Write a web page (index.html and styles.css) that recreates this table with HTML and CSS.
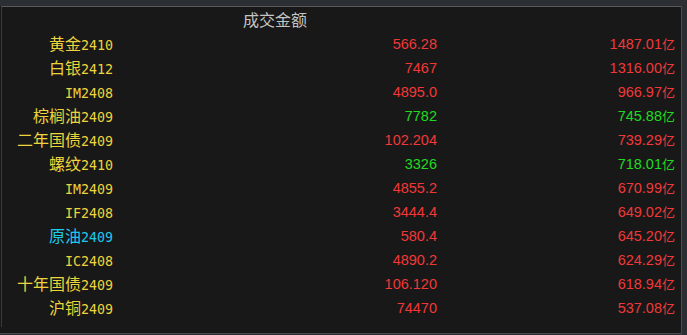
FILE: index.html
```html
<!DOCTYPE html>
<html lang="zh">
<head>
<meta charset="utf-8">
<link rel="stylesheet" href="styles.css">
</head>
<body>
<div class="panel">
  <div class="frame">
    <div class="grid">
      <div class="hd"></div><div class="hd hd-amt">成交金额</div><div class="hd"></div>

      <div class="name">黄金<span class="code">2410</span></div><div class="num up">566.28</div><div class="num up">1487.01<span class="yi">亿</span></div>
      <div class="name">白银<span class="code">2412</span></div><div class="num up">7467</div><div class="num up">1316.00<span class="yi">亿</span></div>
      <div class="name"><span class="code">IM2408</span></div><div class="num up">4895.0</div><div class="num up">966.97<span class="yi">亿</span></div>
      <div class="name">棕榈油<span class="code">2409</span></div><div class="num down">7782</div><div class="num down">745.88<span class="yi">亿</span></div>
      <div class="name">二年国债<span class="code">2409</span></div><div class="num up">102.204</div><div class="num up">739.29<span class="yi">亿</span></div>
      <div class="name">螺纹<span class="code">2410</span></div><div class="num down">3326</div><div class="num down">718.01<span class="yi">亿</span></div>
      <div class="name"><span class="code">IM2409</span></div><div class="num up">4855.2</div><div class="num up">670.99<span class="yi">亿</span></div>
      <div class="name"><span class="code">IF2408</span></div><div class="num up">3444.4</div><div class="num up">649.02<span class="yi">亿</span></div>
      <div class="name cyan">原油<span class="code">2409</span></div><div class="num up">580.4</div><div class="num up">645.20<span class="yi">亿</span></div>
      <div class="name"><span class="code">IC2408</span></div><div class="num up">4890.2</div><div class="num up">624.29<span class="yi">亿</span></div>
      <div class="name">十年国债<span class="code">2409</span></div><div class="num up">106.120</div><div class="num up">618.94<span class="yi">亿</span></div>
      <div class="name">沪铜<span class="code">2409</span></div><div class="num up">74470</div><div class="num up">537.08<span class="yi">亿</span></div>
    </div>
  </div>
</div>
</body>
</html>
```

FILE: styles.css
```css
html, body {
  margin: 0;
  padding: 0;
  background: #2b2e33;
  width: 687px;
  height: 335px;
  overflow: hidden;
}

.panel {
  width: 681px;
  height: 327px;
  background: #181818;
  border-right: 1px solid #4a4a4a;
  border-bottom: 1px solid #4a4a4a;
}

.frame {
  margin-top: 6px;
  margin-left: 1px;
  height: 320px;
  border-top: 1px solid #5a5a5a;
  border-left: 1px solid #3a3a3a;
}

.grid {
  display: grid;
  grid-template-columns: 111px 324px 238px;
  grid-template-rows: 25px;
  grid-auto-rows: 24px;
}

.hd {
  font-family: "Noto Sans CJK SC", sans-serif;
  font-size: 16px;
  line-height: 25px;
  color: #c4c4c4;
}

.hd-amt {
  text-align: center;
}

.name {
  font-family: "Noto Sans CJK SC", sans-serif;
  font-size: 16px;
  line-height: 22px;
  height: 24px;
  overflow: hidden;
  text-align: right;
  color: #ecd43c;
  white-space: nowrap;
}

.name.cyan {
  color: #1ec8ee;
}

.code {
  font-family: "DejaVu Sans Mono", monospace;
  font-size: 13.3px;
  line-height: 16px;
}

.num {
  font-family: "Liberation Sans", Arial, sans-serif;
  font-size: 14.5px;
  line-height: 24px;
  text-align: right;
  white-space: nowrap;
}

.yi {
  font-family: "Noto Sans CJK SC", sans-serif;
  font-size: 13px;
  line-height: 16px;
}

.up {
  color: #f03838;
}

.down {
  color: #1edc1e;
}
```
